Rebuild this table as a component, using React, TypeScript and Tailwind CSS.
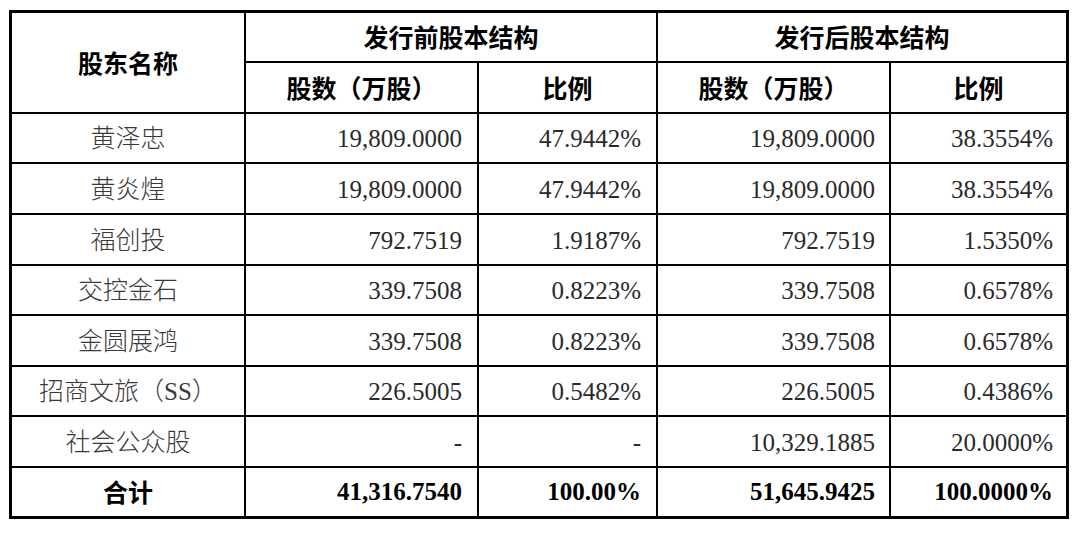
const HEAD = "font-['Noto_Sans_CJK_SC',sans-serif] font-bold text-[25px] text-black";
const NAME = "font-['Liberation_Serif','Noto_Sans_CJK_SC',serif] font-light text-[25px] text-[#3a3a3a]";
const NUM = "font-['Liberation_Serif','Noto_Sans_CJK_SC',serif] text-[25px] text-[#2a2a2a]";

type Row = { name: string; before: string; beforePct: string; after: string; afterPct: string };

const ROWS: Row[] = [
  { name: '黄泽忠', before: '19,809.0000', beforePct: '47.9442%', after: '19,809.0000', afterPct: '38.3554%' },
  { name: '黄炎煌', before: '19,809.0000', beforePct: '47.9442%', after: '19,809.0000', afterPct: '38.3554%' },
  { name: '福创投', before: '792.7519', beforePct: '1.9187%', after: '792.7519', afterPct: '1.5350%' },
  { name: '交控金石', before: '339.7508', beforePct: '0.8223%', after: '339.7508', afterPct: '0.6578%' },
  { name: '金圆展鸿', before: '339.7508', beforePct: '0.8223%', after: '339.7508', afterPct: '0.6578%' },
  { name: '招商文旅（SS）', before: '226.5005', beforePct: '0.5482%', after: '226.5005', afterPct: '0.4386%' },
  { name: '社会公众股', before: '-', beforePct: '-', after: '10,329.1885', afterPct: '20.0000%' },
];

export default function App() {
  return (
    <div className="bg-white w-[1080px] h-[533px] pt-[10px] pl-[9px]">
      <div className="w-[1060px] border-[3px] border-black bg-black">
        <div className="grid grid-cols-[232px_231px_177px_231px_175px] grid-rows-[48px_49px_48px_49px_49px_48px_49px_48px_49px_48px] gap-[2px]">
          {/* Header */}
          <div className={`row-span-2 bg-white flex items-center justify-center ${HEAD}`}>股东名称</div>
          <div className={`col-span-2 bg-white flex items-center justify-center ${HEAD}`}>发行前股本结构</div>
          <div className={`col-span-2 bg-white flex items-center justify-center ${HEAD}`}>发行后股本结构</div>
          <div className={`bg-white flex items-center justify-center ${HEAD}`}>股数（万股）</div>
          <div className={`bg-white flex items-center justify-center ${HEAD}`}>比例</div>
          <div className={`bg-white flex items-center justify-center ${HEAD}`}>股数（万股）</div>
          <div className={`bg-white flex items-center justify-center ${HEAD}`}>比例</div>

          {/* Body */}
          {ROWS.map((r) => (
            <div key={r.name} className="contents">
              <div className={`bg-white flex items-center justify-center pt-[2px] ${NAME}`}>{r.name}</div>
              <div className={`bg-white flex items-center justify-end pr-[15px] pt-[2px] ${NUM}`}>{r.before}</div>
              <div className={`bg-white flex items-center justify-end pr-[15px] pt-[2px] ${NUM}`}>{r.beforePct}</div>
              <div className={`bg-white flex items-center justify-end pr-[14px] pt-[2px] ${NUM}`}>{r.after}</div>
              <div className={`bg-white flex items-center justify-end pr-[13px] pt-[2px] ${NUM}`}>{r.afterPct}</div>
            </div>
          ))}

          {/* Total */}
          <div className={`bg-white flex items-center justify-center ${HEAD}`}>合计</div>
          <div className={`bg-white flex items-center justify-end pr-[15px] font-bold ${NUM} text-black`}>41,316.7540</div>
          <div className={`bg-white flex items-center justify-end pr-[15px] font-bold ${NUM} text-black`}>100.00%</div>
          <div className={`bg-white flex items-center justify-end pr-[14px] font-bold ${NUM} text-black`}>51,645.9425</div>
          <div className={`bg-white flex items-center justify-end pr-[13px] font-bold ${NUM} text-black`}>100.0000%</div>
        </div>
      </div>
    </div>
  );
}
